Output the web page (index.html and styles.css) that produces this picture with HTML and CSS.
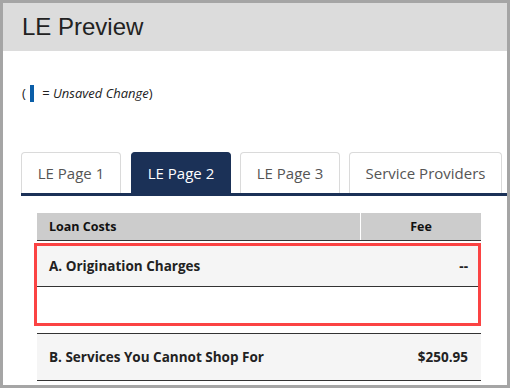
FILE: index.html
```html
<!DOCTYPE html>
<html lang="en">
<head>
    <meta charset="UTF-8">
    <meta name="viewport" content="width=device-width, initial-scale=1.0">
    <title>LE Preview</title>
    <link rel="stylesheet" href="styles.css">
</head>
<body>

    <div class="frame">
        <div class="header">
            <h1>LE Preview</h1>
        </div>

        <p class="legend">
            (<span class="unsaved-mark"></span> = <em>Unsaved Change</em>)
        </p>

        <div class="tabs">
            <div class="tab">LE Page 1</div>
            <div class="tab active">LE Page 2</div>
            <div class="tab">LE Page 3</div>
            <div class="tab wide">Service Providers</div>
        </div>

        <div class="costs">
            <div class="costs-head">
                <div class="col-name">Loan Costs</div>
                <div class="col-fee">Fee</div>
            </div>

            <!-- highlighted section -->
            <div class="highlight">
                <div class="cost-row">
                    <div class="col-name">A. Origination Charges</div>
                    <div class="col-fee">--</div>
                </div>
                <div class="cost-empty"></div>
            </div>

            <div class="cost-row section-b">
                <div class="col-name">B. Services You Cannot Shop For</div>
                <div class="col-fee">$250.95</div>
            </div>
        </div>
    </div>

</body>
</html>
```

FILE: styles.css
```css
body {
    margin: 0;
    font-family: "Open Sans", "Noto Sans", sans-serif;
    color: #222;
    background-color: #fff;
}

.frame {
    width: 510px;
    height: 388px;
    border: 3px solid #a5a5a5;
    box-sizing: border-box;
    overflow: hidden;
}

.header {
    height: 48px;
    background-color: #dcdcdc;
    padding-left: 19px;
}

h1 {
    margin: 0;
    font-family: "Liberation Sans", Arial, sans-serif;
    font-weight: normal;
    font-size: 24px;
    line-height: 48px;
    color: #222;
}

.legend {
    margin: 32px 0 0 19px;
    font-size: 13px;
    line-height: 20px;
    color: #222;
}

.unsaved-mark {
    display: inline-block;
    width: 4px;
    height: 17px;
    margin: 0 5px 0 4px;
    background-color: #0b5ea8;
    vertical-align: -4px;
}

.legend em {
    font-style: italic;
}

.tabs {
    display: flex;
    gap: 9px;
    margin: 49px 0 0 18px;
    border-bottom: 3px solid #1b3157;
}

.tab {
    width: 100px;
    height: 41px;
    box-sizing: border-box;
    display: flex;
    align-items: center;
    justify-content: center;
    border: 1px solid #dadada;
    border-bottom: none;
    border-radius: 4px 4px 0 0;
    font-size: 15px;
    color: #555;
}

.tab:first-child {
    margin-right: 1px;
}

.tab.active {
    background-color: #1b3157;
    border-color: #1b3157;
    color: #fff;
}

.tab.wide {
    width: 153px;
}

.costs {
    width: 444px;
    margin: 17px 0 0 34px;
}

.costs-head {
    display: flex;
    height: 27px;
    background-color: #ccc;
    border-bottom: 1px solid #333;
    font-size: 12.5px;
    font-weight: bold;
    color: #111;
}

.costs-head .col-name {
    flex: 1;
    display: flex;
    align-items: center;
    padding-left: 12px;
    border-right: 1px solid #fff;
}

.costs-head .col-fee {
    width: 120px;
    display: flex;
    align-items: center;
    justify-content: center;
}

.highlight {
    width: 447px;
    box-sizing: border-box;
    margin: 2px 0 0 -3px;
    border: 3px solid #fb4343;
}

.cost-row {
    display: flex;
    justify-content: space-between;
    align-items: center;
    height: 41px;
    box-sizing: border-box;
    padding: 0 13px 0 12px;
    background-color: #f5f5f5;
    border-bottom: 1px solid #333;
    font-size: 13.5px;
    font-weight: bold;
    color: #222;
}

.highlight .cost-row {
    padding-right: 10px;
}

.cost-empty {
    height: 36px;
}

.section-b {
    height: 48px;
    margin-top: 7px;
    border-top: 1px solid #333;
}
```
